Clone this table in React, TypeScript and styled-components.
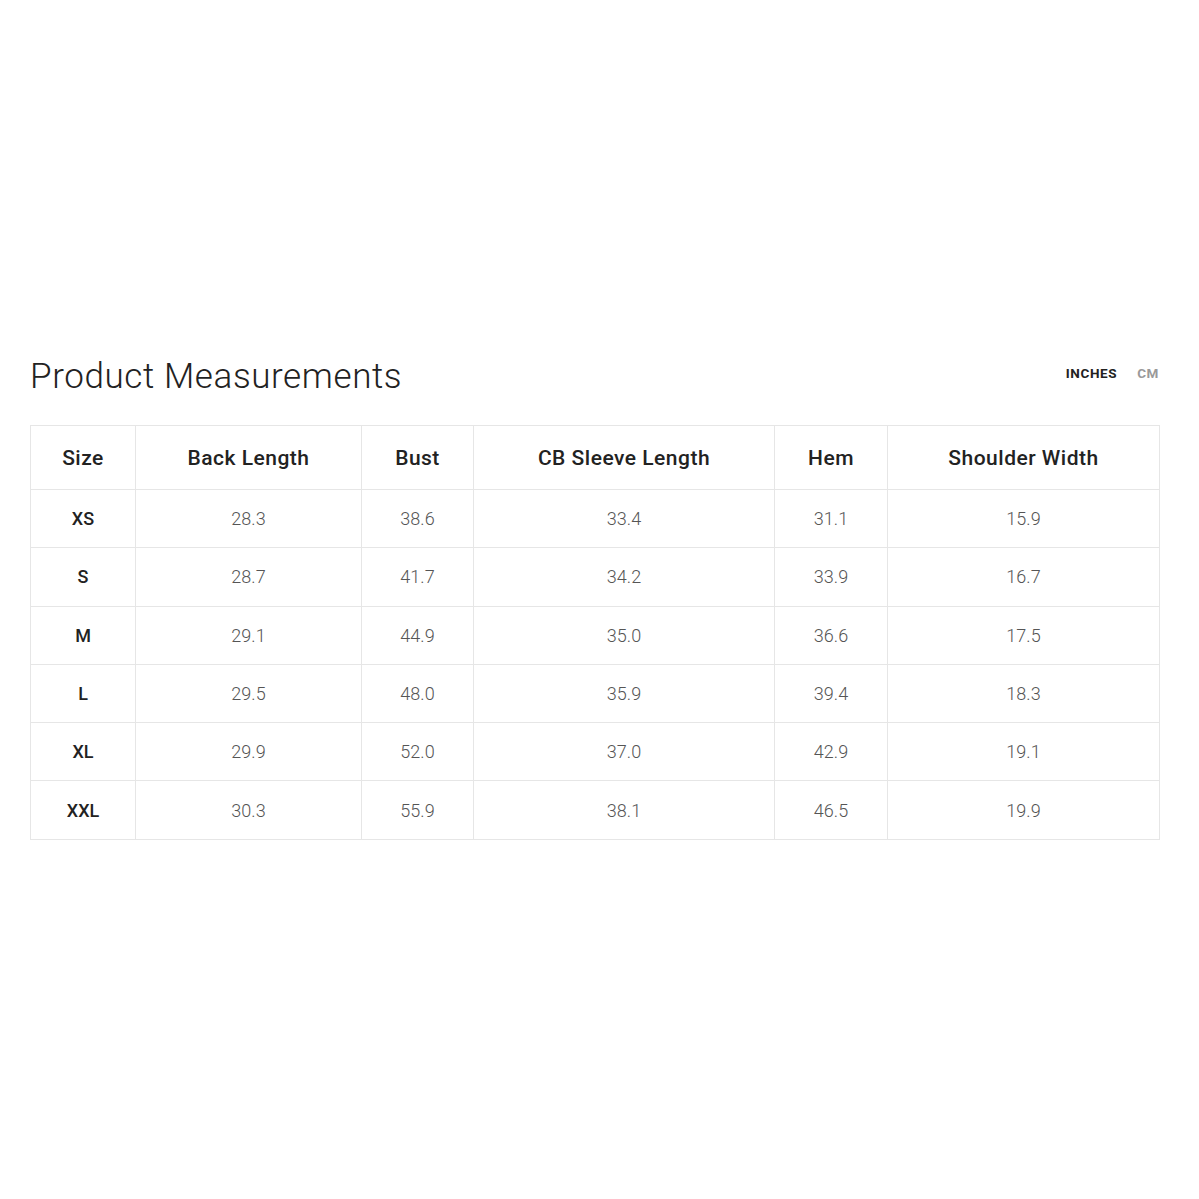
import styled, { createGlobalStyle } from "styled-components";

type Row = {
  size: string;
  values: string[];
};

const columns = [
  { label: "Size", width: 105 },
  { label: "Back Length", width: 226 },
  { label: "Bust", width: 112 },
  { label: "CB Sleeve Length", width: 301 },
  { label: "Hem", width: 113 },
  { label: "Shoulder Width", width: 272 },
];

const rows: Row[] = [
  { size: "XS", values: ["28.3", "38.6", "33.4", "31.1", "15.9"] },
  { size: "S", values: ["28.7", "41.7", "34.2", "33.9", "16.7"] },
  { size: "M", values: ["29.1", "44.9", "35.0", "36.6", "17.5"] },
  { size: "L", values: ["29.5", "48.0", "35.9", "39.4", "18.3"] },
  { size: "XL", values: ["29.9", "52.0", "37.0", "42.9", "19.1"] },
  { size: "XXL", values: ["30.3", "55.9", "38.1", "46.5", "19.9"] },
];

const GlobalStyle = createGlobalStyle`
  body {
    margin: 0;
    background: #ffffff;
    font-family: Roboto, "Liberation Sans", sans-serif;
    color: #222;
  }
`;

// Size chart with a unit switch above it
export default function App() {
  return (
    <>
      <GlobalStyle />
      <Page>
        <HeaderBar>
          <Title>Product Measurements</Title>
          <UnitSwitch>
            <Unit active>INCHES</Unit>
            <Unit active={false}>CM</Unit>
          </UnitSwitch>
        </HeaderBar>
        <Table>
          <colgroup>
            {columns.map((c) => (
              <col key={c.label} style={{ width: c.width }} />
            ))}
          </colgroup>
          <thead>
            <tr>
              {columns.map((c) => (
                <HeadCell key={c.label}>{c.label}</HeadCell>
              ))}
            </tr>
          </thead>
          <tbody>
            {rows.map((row) => (
              <tr key={row.size}>
                <SizeCell>{row.size}</SizeCell>
                {row.values.map((v, i) => (
                  <ValueCell key={i}>{v}</ValueCell>
                ))}
              </tr>
            ))}
          </tbody>
        </Table>
      </Page>
    </>
  );
}

const Page = styled.div`
  width: 1199px;
  height: 1199px;
  box-sizing: border-box;
  padding: 354px 40px 0 30px;
`;

const HeaderBar = styled.div`
  display: flex;
  justify-content: space-between;
  align-items: center;
  height: 44px;
  margin-bottom: 27px;
`;

const Title = styled.h1`
  margin: 0;
  font-family: Roboto, sans-serif;
  font-weight: 300;
  font-size: 35px;
  letter-spacing: 0.6px;
  color: #222;
`;

const UnitSwitch = styled.div`
  display: flex;
  gap: 20px;
  margin-top: -6px;
`;

const Unit = styled.span<{ active: boolean }>`
  font-size: 13.5px;
  font-weight: 700;
  letter-spacing: 0.6px;
  color: ${(p) => (p.active ? "#222" : "#9a9a9a")};
  cursor: pointer;
`;

const Table = styled.table`
  width: 1129px;
  border-collapse: collapse;
  table-layout: fixed;
`;

const HeadCell = styled.th`
  height: 63px;
  border: 1px solid #e6e6e6;
  font-size: 21px;
  font-weight: 500;
  letter-spacing: 0.5px;
  color: #222;
  text-align: center;
  padding: 0;
`;

const SizeCell = styled.td`
  height: 57.3px;
  border: 1px solid #e6e6e6;
  font-size: 18px;
  font-weight: 500;
  color: #222;
  text-align: center;
  padding: 0;
`;

const ValueCell = styled.td`
  height: 57.3px;
  border: 1px solid #e6e6e6;
  font-size: 18px;
  font-weight: 300;
  color: #555;
  text-align: center;
  padding: 0;
`;
